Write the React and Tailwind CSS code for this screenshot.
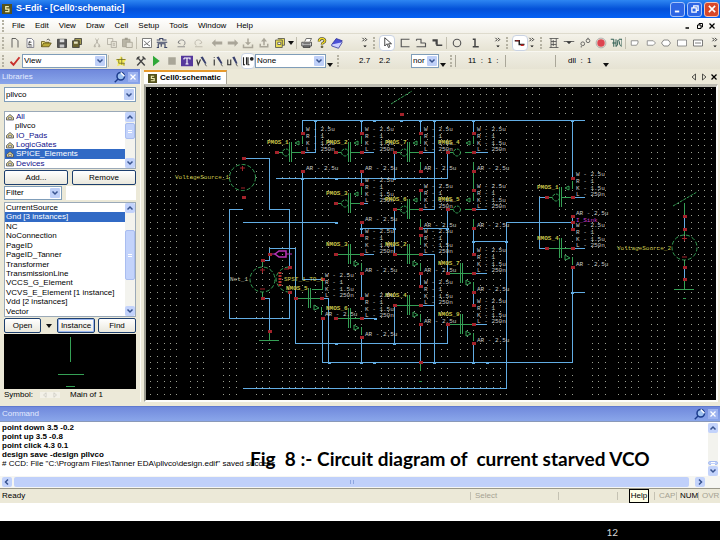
import React from 'react';
import clsx from 'clsx';

const WIRE = '#62ade4';
const GREEN = '#35a055';
const PIN = '#a3232b';
const YELLOW = '#c9c64a';

/* ---------- toolbar drawings, all on a 16x16 box ---------- */

const glyphs = {
  page: <path d="M4 2h5l3 3v9M4 2v12" stroke="#333" />,
  sheet: <><path d="M4 2h6l3 3v9H4z" stroke="#667" fill="#fff" /><path d="M6 7h4M8 5l-2 5h4M6 12h5" stroke="#333" /></>,
  open: <><path d="M2 13V6h4l1 1h5v2" stroke="#554a10" fill="#e8dc7a" /><path d="M2 13l3-5h10l-3 5z" fill="#b8a838" stroke="#554a10" /><path d="M9 4c2-2 4-1 4 1" stroke="#333" /></>,
  save: <><path d="M2 3h12v11H2z" fill="#555" stroke="#333" /><path d="M5 3h6v4H5z" fill="#ddd" /><path d="M5 10h6v4H5z" fill="#c9c9c9" /></>,
  saveAll: <><path d="M5 2h9v8h-9z" fill="#a39a50" stroke="#333" /><path d="M2 5h9v9H2z" fill="#6b6430" stroke="#333" /><path d="M4 6h5v3H4z" fill="#e8e4c0" /></>,
  cut: <path d="M6 2l4 8M10 2L6 10M5 10l-1 3h2zM11 10l1 3h-2z" stroke="#aaa69a" />,
  copy: <><path d="M2 2h7v8H2z" stroke="#aaa69a" /><path d="M7 6h7v8H7z" stroke="#aaa69a" fill="#e4e1d4" /><path d="M9 9h3M9 11h3" stroke="#aaa69a" /></>,
  paste: <><path d="M2 3h10v10H2z" fill="#b9b5a6" stroke="#a09c8e" /><path d="M7 7h8v7H7z" fill="#e4e1d4" stroke="#a09c8e" /><path d="M5 1h4v3H5z" fill="#a09c8e" /></>,
  chart: <><path d="M2 2h12v12H2z" stroke="#555" fill="#fff" /><path d="M4 5l4 4 4-4M4 11l3-2 5 3" stroke="#444" /></>,
  wave: <><path d="M1 4h4v-2h4v2h5M1 7h14" stroke="#3b4466" strokeWidth="1.5" /><path d="M3 14v-5h9v5M1 14h3M11 14h4M7 9v4" stroke="#3b4466" strokeWidth="1.5" /></>,
  undo: <path d="M3 8c0-5 9-6 9 0 0 2-1 3-2 3M2 13h10M3 8l3 1M3 8l1-3" stroke="#777" />,
  redo: <path d="M13 8c0-5-9-6-9 0 0 2 1 3 2 3M4 13h10M13 8l-3 1" stroke="#b3afa2" />,
  left: <path d="M1 8l5-5v3h9v4H6v3z" fill="#aaa699" />,
  right: <path d="M15 8l-5-5v3H1v4h9v3z" fill="#aaa699" />,
  down: <><path d="M8 11L4 7h3V2h2v5h3z" fill="#aaa699" /><path d="M2 10v4h12v-4" stroke="#aaa699" strokeWidth="2" /></>,
  up: <><path d="M8 1L4 6h3v5h2V6h3z" fill="#aaa699" /><path d="M3 9v4h10v-4" stroke="#aaa699" strokeWidth="2" /></>,
  note: <><path d="M2 4h9v10H2zM5 2h9v9h-3" fill="#e9dd55" stroke="#444" /><path d="M5 7h4v3H5z" fill="#fff" stroke="#444" /></>,
  print: <><path d="M5 6l2-4h7l-2 4" fill="#fff" stroke="#444" /><path d="M1 7h13v5H1z" fill="#ccc" stroke="#333" /><path d="M3 12h9v2H3zM3 9h9" stroke="#333" fill="#888" /></>,
  help: <><path d="M4 6c0-5 8-5 8-1 0 3-4 2-4 5" stroke="#333" strokeWidth="3.5" /><path d="M4 6c0-5 8-5 8-1 0 3-4 2-4 5" stroke="#f3dd22" strokeWidth="2" /><path d="M7 12h2v2H7z" fill="#f3dd22" stroke="#333" /></>,
  book: <><path d="M1 10l6-8 8 3-5 8z" fill="#4b50d6" stroke="#2b2f96" /><path d="M1 10v2l9 3 5-8" stroke="#2b2f96" fill="#cdd0ff" /></>,
  cursor: <path d="M5 1v11l3-3 2 5 2-1-2-4h4z" fill="#fff" stroke="#111" />,
  box: <path d="M14 3H3v10h11" stroke="#555" strokeWidth="1.5" />,
  poly: <path d="M2 3h6v5h6M2 3v2M2 13h12V8" stroke="#555" strokeWidth="1.5" />,
  path: <path d="M2 4h6v7h7M2 5h5v5" stroke="#444" strokeWidth="2" />,
  circle: <circle cx="8" cy="8" r="5" stroke="#555" strokeWidth="1.5" />,
  ell: <path d="M5 3h3v10M5 13h8" stroke="#444" strokeWidth="2" />,
  wire: <><path d="M1 5h6v5h7" stroke="#222" strokeWidth="2" /><path d="M9 11h4" stroke="#c22" strokeWidth="2" /><path d="M2 5h5" stroke="#c22" /></>,
  ladder: <path d="M2 2h12M2 14h12M4 2v12M11 2v12M4 6h7M4 10h7M7 4v8" stroke="#444" />,
  node: <path d="M1 6h14M5 6h6l-3 3z" fill="#333" stroke="#444" />,
  jump: <><circle cx="5" cy="9" r="2.500" stroke="#444" /><circle cx="12" cy="5" r="2.500" stroke="#444" /><path d="M3 14v-2M12 1v2" stroke="#444" /></>,
  dot: <><circle cx="8" cy="8" r="6.500" stroke="#999" /><circle cx="8" cy="8" r="5" fill="#dd4450" /></>,
  marks: <path d="M1 3h4v10M3 8h5M8 3v10M8 12c4 0 1-8 3-8s1 8 4 8M12 3h4v10" stroke="#2c5a50" strokeWidth="1.300" />,
  gateIn: <path d="M3 5h9v3l-2 3H3z" stroke="#777" fill="#fff" />,
  gateOut: <path d="M3 5h8l3 3-3 3H3z" stroke="#777" fill="#fff" />,
  gateIo: <path d="M2 8l3-4h6l3 4-3 4H5z" stroke="#666" fill="#fff" />,
  rect: <path d="M2 4h12v8H2z" stroke="#777" fill="#fff" />,
  card: <path d="M2 4h12v8H2zM4 8h8" stroke="#555" fill="#fff" />,
  check: <path d="M2 9l4 4 8-10" stroke="#c8322f" strokeWidth="2.500" />,
  star: <><path d="M8 1l2 4 5 1-3 4 1 5-5-2-5 2 1-5-3-4 5-1z" fill="#f4ec5c" /><path d="M2 6h12M5 6v5h8M9 3v10M12 11v3" stroke="#6d6520" /></>,
  tools: <path d="M3 14L12 4M10 2l4 4M3 3l10 11M2 6l4-4" stroke="#444" strokeWidth="1.800" />,
  play: <path d="M4 1l9 7-9 7z" fill="#2fa838" />,
  stop: <path d="M3 3h10v10H3z" fill="#a9a698" />,
  text: <><path d="M0 1h16v14H0z" fill="#55389c" /><path d="M4 4h8v2M8 4v8M4 4v2M6 12h4" stroke="#fff" strokeWidth="1.500" /></>,
  probeV: <><path d="M1 6l2 7 3-7" stroke="#333" strokeWidth="1.500" /><path d="M6 3l6 9 2-1-5-9z" fill="#39406e" /><path d="M12 12l2 3" stroke="#333" /></>,
  probeI: <><path d="M3 6v8M3 3v1" stroke="#333" strokeWidth="1.500" /><path d="M6 3l6 9 2-1-5-9z" fill="#39406e" /><path d="M12 12l2 3" stroke="#333" /></>,
  probeU: <><path d="M1 6v7h4V6" stroke="#333" strokeWidth="1.500" /><path d="M7 3l5 9 2-1-4-9z" fill="#39406e" /><path d="M12 12l2 3" stroke="#333" /></>,
  bars: <><path d="M2 3v10h2M6 3v10M8 3v10h2" stroke="#222" strokeWidth="1.500" /><circle cx="13" cy="5" r="2.500" fill="#222" /></>,
  pin: <><path d="M1 15l5-5" stroke="#1c3c8c" strokeWidth="2" /><circle cx="9" cy="7" r="5" fill="#9cc0f0" stroke="#1c3c8c" strokeWidth="2" /><path d="M9 2l5 5" stroke="#fff" strokeWidth="2" /></>,
  close: <path d="M3 3l10 10M13 3L3 13" stroke="currentColor" strokeWidth="2.500" />,
  min: <path d="M3 12h7" stroke="currentColor" strokeWidth="3" />,
  restore: <path d="M6 6V3h7v7h-3M3 6h7v7H3z" stroke="currentColor" strokeWidth="2" />,
  chevDown: <path d="M3 5l5 5 5-5" stroke="#38538f" strokeWidth="3" />,
  chevUp: <path d="M3 11l5-5 5 5" stroke="#38538f" strokeWidth="3" />,
  chevLeft: <path d="M10 3L5 8l5 5" stroke="#38538f" strokeWidth="3" />,
  chevRight: <path d="M6 3l5 5-5 5" stroke="#38538f" strokeWidth="3" />,
  triLeft: <path d="M11 2v12L4 8z" stroke="#222" strokeWidth="1.500" />,
  triRight: <path d="M5 2v12l7-6z" stroke="#222" strokeWidth="1.500" />,
  lib: <><path d="M1 9l7-6 7 6v5H1z" fill="#ddd28a" stroke="#445" strokeWidth="1.500" /><path d="M5 9h6v3H5z" fill="#fff" stroke="#335" /></>,
  logo: <><path d="M0 0h16v16H0z" fill="#55531d" /><path d="M11 4H6v4h5v4H5" stroke="#efeeb4" strokeWidth="2" /></>,
};

const Glyph = ({ name, className = 'size-3' }) => (
  <svg viewBox="0 0 16 16" fill="none" className={clsx('shrink-0', className)} aria-hidden="true">
    {glyphs[name]}
  </svg>
);

/* ---------- small controls ---------- */

const Tool = ({ name, active, className }) => (
  <button
    aria-label={name}
    className={clsx('flex h-4 items-center justify-center', active && 'rounded-sm border border-[#c9d2e2] bg-white', className)}
  >
    <Glyph name={name} />
  </button>
);

const ToolGroup = ({ names, className }) => (
  <div className={clsx('grid shrink-0 auto-cols-fr grid-flow-col', className)}>
    {names.map((name) => <Tool key={name} name={name} />)}
  </div>
);

const Grip = ({ className }) => <span className={clsx('h-3 w-0 shrink-0 border-l-2 border-dotted border-[#b5b2a3]', className)} />;
const Divider = ({ className }) => <span className={clsx('h-3 w-px shrink-0 bg-[#c2bfb0]', className)} />;

const More = ({ className }) => (
  <button aria-label="More buttons" className={clsx('flex w-2 shrink-0 justify-center', className)}>
    <svg viewBox="0 0 8 14" className="h-3 w-2" fill="none" stroke="#111">
      <path d="M1 1l2 2-2 2M4 1l2 2-2 2" />
      <path d="M2 10h4l-2 2z" fill="#111" stroke="none" />
    </svg>
  </button>
);

const Caret = ({ className }) => (
  <svg viewBox="0 0 6 4" className={clsx('h-1 w-[6px] shrink-0', className)}><path d="M0 0h6L3 4z" fill="#111" /></svg>
);

const Combo = ({ label, value, className }) => (
  <div className={clsx('flex shrink-0 items-stretch border border-[#7f9db9] bg-white', className)}>
    <select aria-label={label} className="min-w-0 flex-1 appearance-none bg-white pl-px text-[8px] leading-none outline-none">
      <option>{value}</option>
    </select>
    <span className="pointer-events-none m-px flex w-[10px] shrink-0 items-center justify-center rounded-[1px] bg-[#bfd0f8]">
      <Glyph name="chevDown" className="size-2" />
    </span>
  </div>
);

const XpButton = ({ children, className }) => (
  <button className={clsx('h-[15px] rounded-[2px] border border-[#1d3f6e] bg-linear-to-b from-white to-[#eae8dd] text-[8px] leading-none', className)}>
    {children}
  </button>
);

const ScrollBar = ({ before, thumb, after }) => (
  <div className="flex w-[10px] shrink-0 flex-col bg-[#f3f3ee]">
    <span className="flex h-[10px] shrink-0 items-center justify-center rounded-[2px] bg-[#c3d3fb]"><Glyph name="chevUp" className="size-2" /></span>
    <span className={before} />
    <span className={clsx('flex items-center justify-center rounded-[2px] border border-[#a9bdf0] bg-[#c3d3fb]', thumb)}>
      <span className="h-[3px] w-1 border-y border-white" />
    </span>
    <span className={after} />
    <span className="flex h-[10px] shrink-0 items-center justify-center rounded-[2px] bg-[#c3d3fb]"><Glyph name="chevDown" className="size-2" /></span>
  </div>
);

const PaneHeader = ({ title }) => (
  <div className="flex h-[15px] shrink-0 items-center border-t border-[#5f79cf] bg-linear-to-b from-[#7089dc] to-[#8aa6ea] pr-[2px] pl-[2px] text-[#e3ebff]">
    <h2 className="flex-1 text-[8px]">{title}</h2>
    <button aria-label="Pin"><Glyph name="pin" /></button>
    <button aria-label="Close" className="ml-[2px] flex size-[10px] items-center justify-center bg-[#9db3f0] text-white">
      <Glyph name="close" className="size-2" />
    </button>
  </div>
);

/* ---------- window chrome ---------- */

const TitleBar = () => (
  <header className="flex h-[18px] items-center gap-1 bg-linear-to-b from-[#2e86f2] via-[#0450d8] to-[#0562f5] pr-px pl-[2px]">
    <Glyph name="logo" className="size-[10px]" />
    <h1 className="flex-1 text-[9px] font-bold text-white">S-Edit - [Cell0:schematic]</h1>
    <div className="flex gap-[2px] text-white">
      <button aria-label="Minimize" className="flex size-[15px] items-center justify-center rounded-[3px] border border-[#a8c5fa] bg-[#2e66e4]"><Glyph name="min" className="size-[10px]" /></button>
      <button aria-label="Restore" className="flex size-[15px] items-center justify-center rounded-[3px] border border-[#a8c5fa] bg-[#2e66e4]"><Glyph name="restore" className="size-[10px]" /></button>
      <button aria-label="Close" className="flex size-[15px] items-center justify-center rounded-[3px] border border-[#f3c3b5] bg-[#d8482a]"><Glyph name="close" className="size-[10px]" /></button>
    </div>
  </header>
);

const menus = ['File', 'Edit', 'View', 'Draw', 'Cell', 'Setup', 'Tools', 'Window', 'Help'];

const MenuBar = () => (
  <nav className="flex h-[15px] items-center bg-linear-to-b from-white to-[#f3f1ea] pr-1 pl-[2px]">
    <Grip />
    <div className="ml-2 flex flex-1 gap-[10px]">
      {menus.map((name) => <button key={name} className="text-[8px] leading-none">{name}</button>)}
    </div>
    <div className="flex gap-1 text-black">
      <button aria-label="Minimize document"><Glyph name="min" className="size-2" /></button>
      <button aria-label="Restore document"><Glyph name="restore" className="size-2" /></button>
      <button aria-label="Close document"><Glyph name="close" className="size-2" /></button>
    </div>
  </nav>
);

const MainToolbar = () => (
  <div className="flex h-[18px] items-center overflow-hidden border-t border-[#dedbcd] bg-linear-to-b from-[#f4f2ea] to-[#e6e3d3] pr-px pl-[2px]">
    <Grip className="mr-[3px]" />
    <ToolGroup className="w-[78px]" names={['page', 'sheet', 'open', 'save', 'saveAll']} />
    <ToolGroup className="ml-1 w-[46px]" names={['cut', 'copy', 'paste']} />
    <Divider className="mx-px" />
    <ToolGroup className="ml-px w-[31px]" names={['chart', 'wave']} />
    <ToolGroup className="ml-1 w-8" names={['undo', 'redo']} />
    <ToolGroup className="ml-[3px] w-[79px]" names={['left', 'right', 'down', 'up', 'note']} />
    <Caret />
    <Divider className="mx-[2px]" />
    <ToolGroup className="w-[46px]" names={['print', 'help', 'book']} />
    <More className="ml-4" />
    <Grip className="mx-1" />
    <Tool name="cursor" active className="w-4 shrink-0" />
    <ToolGroup className="ml-[2px] w-12" names={['box', 'poly', 'path']} />
    <Divider className="mx-px" />
    <ToolGroup className="w-[36px]" names={['circle', 'ell']} />
    <More className="ml-[10px]" />
    <Grip className="mx-1" />
    <Tool name="wire" active className="w-4 shrink-0" />
    <More />
    <Grip className="mx-1" />
    <ToolGroup className="w-[78px]" names={['ladder', 'node', 'jump', 'dot', 'marks']} />
    <Divider className="mx-px" />
    <ToolGroup className="w-[79px]" names={['gateIn', 'gateOut', 'gateIo', 'rect', 'card']} />
    <More className="ml-auto" />
  </div>
);

const SimToolbar = () => (
  <div className="flex h-[18px] items-center overflow-hidden border-t border-[#f8f7f1] bg-linear-to-b from-[#f0eee4] to-[#e6e3d3] pl-[2px] text-[8px]">
    <Grip className="mr-[3px]" />
    <Tool name="check" className="w-[15px] shrink-0" />
    <Combo label="View" value="View" className="h-[14px] w-[85px]" />
    <Divider className="ml-px" />
    <Tool name="star" className="ml-1 w-4 shrink-0" />
    <ToolGroup className="ml-1 w-[108px]" names={['tools', 'play', 'stop', 'text', 'probeV', 'probeI', 'probeU']} />
    <Tool name="bars" active className="w-[14px] shrink-0" />
    <Combo label="Probe net" value="None" className="h-[14px] w-[71px]" />
    <Caret className="mt-2 ml-px" />
    <Grip className="ml-1" />
    <span className="ml-5 w-[52px] whitespace-pre">2.7    2.2</span>
    <Combo label="Units" value="nor" className="h-[14px] w-7" />
    <Caret className="mt-2 ml-px" />
    <Grip className="ml-1" />
    <span className="ml-[3px] h-3 w-[50px] border-l border-[#aaa799] pl-3 whitespace-pre">11  :  1  :</span>
    <span className="h-3 w-[50px] border-l border-[#aaa799]" />
    <span className="h-3 w-[46px] border-l border-[#aaa799] pl-3 whitespace-pre">dll  :  1</span>
    <Caret className="mt-2 ml-[2px]" />
  </div>
);

/* ---------- library pane ---------- */

const libraries = ['All', 'pllvco', 'IO_Pads', 'LogicGates', 'SPICE_Elements', 'Devices'];
const cells = [
  'CurrentSource', 'Gnd [3 instances]', 'NC', 'NoConnection', 'PageID', 'PageID_Tanner', 'Transformer',
  'TransmissionLine', 'VCCS_G_Element', 'VCVS_E_Element [1 instance]', 'Vdd [2 instances]', 'Vector',
];

const LibraryPane = () => (
  <aside className="flex w-[141px] shrink-0 flex-col border-r border-[#fdfcf7] bg-[#ece9d8]">
    <PaneHeader title="Libraries" />
    <div className="flex flex-1 flex-col px-1 pt-[3px]">
      <Combo label="Design" value="pllvco" className="h-[15px]" />
      <div className="mt-[9px] flex h-[58px] border border-[#9aa9b8] bg-white">
        <ul className="grid flex-1 auto-rows-fr text-[8px] leading-[9px]">
          {libraries.map((name) => (
            <li
              key={name}
              className={clsx(
                'flex items-center gap-[2px]',
                name === 'pllvco' ? 'pl-[10px]' : 'pl-px',
                name === 'SPICE_Elements' && 'bg-[#316ac5] text-white',
                name !== 'SPICE_Elements' && name !== 'pllvco' && 'text-[#10108c]'
              )}
            >
              {name !== 'pllvco' && <Glyph name="lib" className="size-2" />}
              {name}
            </li>
          ))}
        </ul>
        <ScrollBar before="h-px" thumb="h-4" after="flex-1" />
      </div>
      <div className="mt-px flex gap-1">
        <XpButton className="flex-1">Add...</XpButton>
        <XpButton className="flex-1">Remove</XpButton>
      </div>
      <div className="mt-px flex gap-1">
        <Combo label="Filter type" value="Filter" className="h-[14px] w-[58px]" />
        <input aria-label="Filter text" className="h-[14px] min-w-0 flex-1 bg-white text-[8px] outline-none" />
      </div>
      <div className="mt-[2px] flex h-[115px] border border-[#9aa9b8] bg-white">
        <ul className="grid flex-1 auto-rows-fr text-[8px] leading-[9px]">
          {cells.map((name) => (
            <li key={name} className={clsx('pl-px whitespace-nowrap', name.startsWith('Gnd') && 'bg-[#316ac5] text-white')}>{name}</li>
          ))}
        </ul>
        <ScrollBar before="h-[17px]" thumb="h-[50px]" after="flex-1" />
      </div>
      <div className="mt-px flex items-center">
        <XpButton className="w-[37px]">Open</XpButton>
        <Caret className="mx-[5px]" />
        <XpButton className="w-[38px] ring-1 ring-[#9ab6ee] ring-inset">Instance</XpButton>
        <XpButton className="ml-[3px] w-[38px]">Find</XpButton>
      </div>
      <svg viewBox="0 0 132 55" className="mt-px w-full bg-black" stroke={GREEN} shapeRendering="crispEdges">
        <path d="M66.500 3v25M54 40.500h26M62 52.500h9" />
      </svg>
      <div className="flex h-3 items-center text-[8px]">
        <span className="w-9">Symbol:</span>
        <button aria-label="Previous view" className="w-[10px] bg-[#f3f1e8]"><Glyph name="triLeft" className="mx-auto size-[6px] opacity-25" /></button>
        <button aria-label="Next view" className="w-[10px] bg-[#f3f1e8]"><Glyph name="triRight" className="mx-auto size-[6px] opacity-25" /></button>
        <span className="ml-[10px]">Main of 1</span>
      </div>
    </div>
  </aside>
);

/* ---------- schematic ---------- */

const gridColumns = [
  150, 157, 164, 170, 176, 190, 197, 203, 223, 229, 236, 256, 262, 269, 282, 289, 295, 302, 315, 322, 328,
  348, 355, 361, 381, 388, 394, 401, 407, 414, 420, 427, 434, 441, 447, 460, 467, 473, 480, 486, 493, 500, 506,
  526, 532, 539, 559, 565, 572, 592, 598, 605, 618, 625, 631, 638, 651, 657, 664, 678, 684, 691, 698, 704, 711,
];

const wires = [
  'M302.5 133V120.500H585', 'M315.500 120V152.500H302', 'M243 158.500H269.500V209.500H289.500V267',
  'M243 209.500H229.500V318.500H289.500V292', 'M243 222.500H336', 'M276 178.500H447.500V152', 'M394.500 152V178',
  'M302.500 171V279.500H322', 'M262 260.500H269.500V248.500H295.500V343.500H447.500V324', 'M262 298.500H269.500V331',
  'M322.500 318V362.500H572.500V267', 'M322 298.500H328.500V362', 'M243 388.500H506.500V222.500H572', 'M473 241.500H506',
  'M361.500 120V133M361.500 171V184M361.500 222V235M361.500 273V299M361.500 337V362',
  'M361 152.500H374M361 203.500H368M361 254.500H374M361 318.500H375M361 228.500H394',
  'M394.500 209V254M394.500 305V343', 'M420.500 120V133M420 152.500H434M434.500 120V209.500H420',
  'M420 228.500H447M447.500 209V273', 'M420 254.500H434.500V362M420 305.500H434M420.500 273V286M420.500 324V362',
  'M473.500 120V133M473.500 228V254M473.500 292V305M473.500 343V362',
  'M473 152.500H488M473 209.500H487M473 273.500H487M473 324.500H487',
  'M572.500 120V178M572 197.500H585M572 248.500H585M572 292.500H585', 'M545 197.500H539.500V248.500H545',
  'M684.500 216V229M684.500 267V279M572.500 216V229',
];

const pins = [
  [243, 158], [243, 197], [302, 133], [302, 171], [401, 114], [262, 260], [269, 254], [262, 298], [289, 267], [289, 292],
  [269, 331], [322, 279], [322, 318], [361, 133], [361, 171], [361, 184], [361, 222], [361, 235], [361, 273],
  [361, 298], [361, 337], [420, 133], [420, 171], [420, 190], [420, 228], [420, 235], [420, 273], [420, 286],
  [420, 324], [420, 362], [473, 133], [473, 171], [473, 190], [473, 228], [473, 254], [473, 292], [473, 305],
  [473, 343], [572, 178], [572, 216], [572, 222], [572, 229], [572, 267], [684, 216], [684, 229], [684, 267], [684, 279],
];

const joints = [
  [315, 120], [361, 120], [374, 120], [401, 120], [420, 120], [434, 120], [473, 120], [572, 120], [302, 178], [336, 178], [394, 178],
  [336, 222], [361, 228], [394, 228], [447, 228], [473, 241], [506, 241], [336, 343], [394, 343], [329, 362],
  [361, 362], [374, 362], [434, 362], [473, 362], [487, 362], [572, 292], [375, 318],
];

// x, y is the gate pin
const transistors = [
  { x: 276, y: 152, name: 'PMOS_1', p: true },
  { x: 335, y: 152, name: 'PMOS_2', p: true },
  { x: 394, y: 152, name: 'PMOS_7', p: true },
  { x: 447, y: 152, name: 'PMOS_4', p: true, open: true },
  { x: 335, y: 203, name: 'PMOS_3', p: true },
  { x: 394, y: 209, name: 'PMOS_6', p: true },
  { x: 447, y: 209, name: 'PMOS_5', p: true, open: true },
  { x: 335, y: 254, name: 'NMOS_3' },
  { x: 394, y: 254, name: 'NMOS_2' },
  { x: 447, y: 273, name: 'NMOS_7' },
  { x: 394, y: 305, name: 'NMOS_4' },
  { x: 447, y: 324, name: 'NMOS_9' },
  { x: 335, y: 318, name: 'NMOS_6' },
  { x: 295, y: 298, name: 'NMOS_5' },
  { x: 546, y: 197, name: 'PMOS_1', p: true },
  { x: 546, y: 248, name: 'NMOS_4' },
];

const Pin = ({ x, y }) => <rect x={x - 1} y={y - 1} width="4" height="3" fill={PIN} />;

const Transistor = ({ x, y, name, p, open }) => (
  <g>
    <g stroke={GREEN} fill="none">
      {p ? (
        <>
          <path d={`M${x} ${y + 0.5}h6M${x + (open ? 18 : 15)} ${y + 0.5}H${x + 26}`} />
          <circle cx={x + 10} cy={y + 0.5} r="3.500" strokeDasharray="3 1" />
          <path d={`M${x + 23} ${y - 11}l-4 2 4 2zM${x + 26.5} ${y - 16}v8`} />
        </>
      ) : (
        <>
          <path d={`M${x} ${y + 0.5}H${x + 26}`} />
          <path d={`M${x + 19} ${y + 7}v5l5-2zM${x + 26.5} ${y + 9}v8`} />
        </>
      )}
      {!open && <path d={`M${x + 13.5} ${y - 10}v20M${x + 15.5} ${y - 10}v20`} />}
    </g>
    <Pin x={x} y={y} />
    <Pin x={x + 26} y={y} />
    <text x={x - 9} y={y - 8} fill={YELLOW} fontWeight="bold">{name}</text>
    <g fill="#c9cdc9">
      <text x={x + 30} y={y - 21}>W - 2.5u</text>
      <text x={x + 30} y={y - 14}>R - 1</text>
      <text x={x + 30} y={y - 7}>K - 1.5u</text>
      <text x={x + 30} y={y - 1}>L - 250n</text>
      <text x={x + 30} y={y + 18}>AR - 2.5u</text>
    </g>
  </g>
);

const Schematic = () => (
  <svg viewBox="146 87 570 313" className="block w-full bg-black font-['Liberation_Mono',monospace] text-[6px]" role="img" aria-label="Cell0 schematic">
    <g shapeRendering="crispEdges">
      <g stroke="#9a9e90" strokeDasharray="1 5.370">
        {gridColumns.map((x) => <path key={x} d={`M${x + 0.5} 88V396`} />)}
      </g>
      <g stroke={WIRE} fill="none">
        {wires.map((d) => <path key={d} d={d} />)}
      </g>
      <path
        fill="none"
        stroke={GREEN}
        d="M684.500 203V216M684.500 229V235M684.500 261V267M684.500 279V289M674 289.500H694M683 298.500H686M262.500 260V266M262.500 292V298M269.500 331V340M259 340.500H279M268 349.500H271M420.500 362V371M419 381.500H422M420.500 235V245M420.500 162V171M420.500 190V200M420.500 219V228M473.500 162V190M473.500 219V228M473.500 283V292M322.500 279V289H312"
      />
    </g>
    <g fill="none" stroke={GREEN}>
      <path d="M391 104L412 91" strokeDasharray="3 1" />
      <path d="M673 206L697 192" strokeDasharray="3 1" />
      <circle cx="242.500" cy="177.500" r="13" strokeDasharray="4 2" />
      <circle cx="262.500" cy="279.500" r="12.500" strokeDasharray="4 2" />
      <circle cx="684.500" cy="247.500" r="12.500" strokeDasharray="4 2" />
      <path d="M289 267c-7 0-13 6-13 12s6 13 13 13" strokeDasharray="4 2" />
    </g>
    <path d="M275 254l4-3h7v6h-7z" fill="none" stroke="#b833b8" strokeWidth="1.500" />
    <path d="M269 254h6M286 254h6" stroke="#b833b8" />
    <path d="M280 272v14" stroke="#b3302c" strokeWidth="3" strokeDasharray="2 1" />
    <path d="M240 168h5M242.500 166v5M241 188h4M260 270h5M262.500 268v5M260 289h5M682 238.500h5M684.500 236v5M682 257h5M284 269h5" stroke={PIN} />
    {transistors.map((t) => <Transistor key={`${t.x}-${t.y}`} {...t} />)}
    {pins.map(([x, y]) => <Pin key={`${x}-${y}`} x={x} y={y} />)}
    {joints.map(([x, y]) => <rect key={`${x}-${y}`} x={x - 1} y={y} width="3" height="2" fill={WIRE} />)}
    <g fill={YELLOW}>
      <text x="175" y="179">VoltageSource_1</text>
      <text x="617" y="250">VoltageSource_2</text>
      <text x="284" y="281">SPST_1_TO_1</text>
    </g>
    <text x="230" y="281" fill="#c8c8b0">Net_1</text>
    <text x="576" y="222" fill="#d03cd0">I_Sink</text>
  </svg>
);

const Editor = () => (
  <main className="flex min-w-0 flex-1 flex-col bg-[#ece9d8] pr-[2px] pl-[3px]">
    <div className="flex h-[15px] items-end">
      <button className="flex h-[14px] w-[83px] items-center gap-[3px] border-t-2 border-r border-[#e79a2c] border-r-[#aaa799] bg-white pl-1 text-[8px] leading-none font-bold">
        <Glyph name="logo" className="size-[9px]" />
        Cell0:schematic
      </button>
      <div className="ml-auto flex h-full items-center gap-[2px]">
        <button aria-label="Previous tab"><Glyph name="triLeft" className="size-2" /></button>
        <button aria-label="Next tab"><Glyph name="triRight" className="size-2" /></button>
        <button aria-label="Close tab"><Glyph name="close" className="size-2" /></button>
      </div>
    </div>
    <div className="border-2 border-t-[3px] border-[#9a9a90] border-t-[#bdbcb2] border-r-[#fdfdfa] border-b-[#fdfdfa]">
      <Schematic />
    </div>
  </main>
);

/* ---------- bottom ---------- */

const log = ['point down 3.5 -0.2', 'point up 3.5 -0.8', 'point click 4.3 0.1', 'design save -design pllvco'];

const CommandPane = () => (
  <section className="relative">
    <PaneHeader title="Command" />
    <div className="flex h-[55px] border-t border-[#8a99b8] bg-white pt-px pr-[2px]">
      <div className="flex-1 pl-[2px] text-[8px] leading-[9px] whitespace-nowrap">
        {log.map((line) => <p key={line} className="font-bold">{line}</p>)}
        <p># CCD: File "C:\Program Files\Tanner EDA\pllvco\design.edif" saved success</p>
      </div>
      <ScrollBar before="flex-1" thumb="h-1" after="h-px" />
    </div>
    <div className="flex h-3 items-center gap-[2px] bg-[#f6f6f2] pr-[15px] pl-[2px]">
      <button aria-label="Scroll left" className="flex size-[10px] items-center justify-center rounded-[2px] bg-[#c3d3fb]"><Glyph name="chevLeft" className="size-2" /></button>
      <div className="mr-1 flex h-[10px] flex-1 items-center justify-center rounded-[2px] bg-[#c0d0fa]">
        <span className="h-1 w-1 border-x border-[#8ea6e0]" />
      </div>
      <button aria-label="Scroll right" className="flex size-[10px] items-center justify-center rounded-[2px] bg-[#c3d3fb]"><Glyph name="chevRight" className="size-2" /></button>
    </div>
    <p className="absolute top-[41px] left-[250px] font-['Lato',sans-serif] text-[19px] leading-6 font-bold whitespace-pre text-black">
      Fig  8 :- Circuit diagram of  current starved VCO
    </p>
  </section>
);

const StatusBar = () => (
  <footer className="flex h-[15px] items-center border-t border-[#9a988a] bg-[#ece9d8] pl-[2px] text-[8px] leading-none text-[#a5a293]">
    <span className="flex-1 text-black">Ready</span>
    <span className="w-[88px] border-l border-[#c5c2b3] pl-1">Select</span>
    <span className="h-2 w-[59px] border-l border-[#c5c2b3]" />
    <span className="h-2 w-3 border-l border-[#c5c2b3]" />
    <span className="w-5 border border-black bg-[#ffffe8] py-[2px] text-center text-black">Help</span>
    <span className="ml-[5px] w-[22px] border-l border-[#c5c2b3] pl-1">CAP</span>
    <span className="w-[22px] border-l border-[#c5c2b3] pl-[3px] text-black">NUM</span>
    <span className="w-[22px] border-l border-[#c5c2b3] pl-[3px]">OVR</span>
  </footer>
);

export default function App() {
  return (
    <div className="flex min-h-screen flex-col overflow-hidden bg-black font-['Liberation_Sans',Arial,sans-serif] text-black">
      <TitleBar />
      <MenuBar />
      <MainToolbar />
      <SimToolbar />
      <div className="flex border-b-4 border-[#ece9d8]">
        <LibraryPane />
        <Editor />
      </div>
      <CommandPane />
      <StatusBar />
      <div className="h-[18px] bg-white" />
      <div className="flex-1 pt-1 pr-[102px] text-right font-['Lato',sans-serif] text-[10px] text-[#d5d5d5]">12</div>
    </div>
  );
}
